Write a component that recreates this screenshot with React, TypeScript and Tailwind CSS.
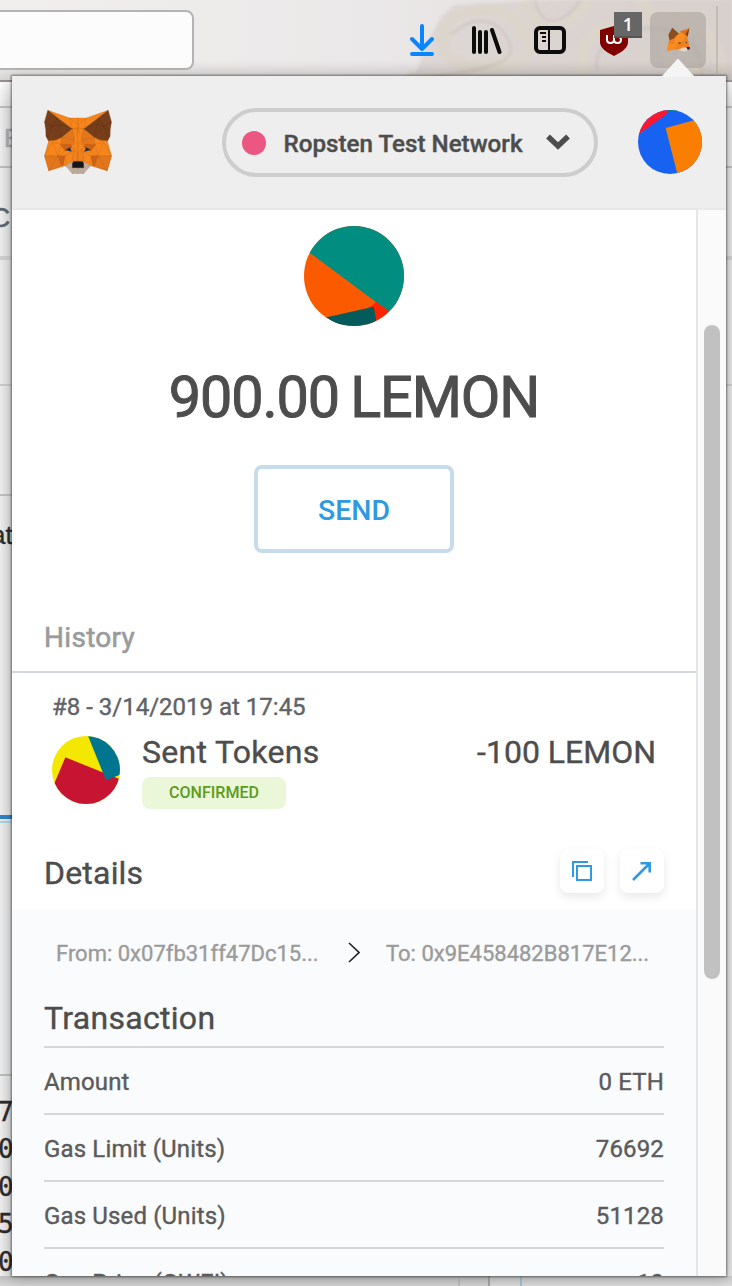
import type { ReactNode } from "react";

function FoxHalf() {
  return (
    <g stroke="#b05a14" strokeOpacity="0.55" strokeWidth="1.3" strokeLinejoin="round">
      <path d="M52 46L118 69H143V215L126 221L105 213L55 228L42 183L54 140L50 132L95 127L126 102Z" fill="#f6851b" />
      <path d="M52 46L126 102L95 127L76 136L54 138L50 130L46 124V108L42 82Z" fill="#763e1a" />
      <path d="M52 46L42 82L66 94L80 70ZM66 94L46 108L50 132L66 94M66 94L95 127M80 70L84 88L126 102M84 88L66 94M84 88L95 127" fill="none" stroke="#4f2708" />
      <path d="M118 69L143 90M118 69L126 102L143 98M126 102L143 102" fill="none" />
      <path d="M126 102L95 127L92 148L130 150L132 134Z" fill="#e4761b" />
      <path d="M95 127L128 135L143 102M128 135L143 148" fill="none" />
      <path d="M90 149H122L126 157L104 169Z" fill="#cd6116" />
      <path d="M42 183H82L94 213L55 228Z" fill="#e2761b" />
      <path d="M82 183H104L98 213H94Z" fill="#cd6116" />
      <path d="M55 228L82 183L66 142L42 183M66 142L92 148L82 183L104 169M95 127L54 140" fill="none" />
      <path d="M104 183L130 168L128 200L108 213Z" fill="#f6851b" />
      <path d="M130 160L143 178V200H126Z" fill="#ef8020" />
      <path d="M104 166L119 157L124 171Z" fill="#233447" stroke="none" />
      <path d="M105 213L126 200L130 218H143V237H126Z" fill="#c0ad9e" stroke="#9a887a" />
      <path d="M105 213L130 221L126 237L143 222" fill="none" stroke="#9a887a" />
      <path d="M130 200H143.5V219H126V206Z" fill="#161616" stroke="#161616" />
    </g>
  );
}

function FoxLogo() {
  return (
    <svg viewBox="41 45 204 193" className="h-16 w-[68px]">
      <FoxHalf />
      <g transform="translate(286 0) scale(-1 1)">
        <FoxHalf />
      </g>
    </svg>
  );
}

function SmallFox() {
  return (
    <svg viewBox="230 66 70 76" className="h-[25px] w-[23px]">
      <path d="M238 96L252 92L272 82L298 70L292 98L299 130L284 135L258 134L231 138L234 118Z" fill="#f0801c" />
      <path d="M246 68L266 86L252 100L238 106L234 90Z" fill="#8a4d20" />
      <path d="M268 80L298 70L291 92L282 88Z" fill="#dd7418" />
      <path d="M291 80L298 70L293 96L286 88Z" fill="#7d451e" />
      <path d="M254 97L272 82L288 92L276 110L254 118Z" fill="#f98e22" />
      <path d="M234 118L260 118L252 134L231 138Z" fill="#f98c20" />
      <path d="M264 112L274 114L268 118ZM286 112L291 111L290 116Z" fill="#40362c" />
      <path d="M264 136L278 128L298 128L296 136L282 141Z" fill="#e6d4c6" />
      <path d="M289 127H299V134L293 135Z" fill="#1c1c1c" />
    </svg>
  );
}

function HeaderAvatar() {
  return (
    <svg viewBox="1284 45 192 192" className="size-16 rounded-full bg-[#1862f2]">
      <path d="M1367 99L1452 76L1490 66V240H1403Z" fill="#fa7f00" />
      <path d="M1280 122L1374 54V40H1280Z" fill="#fc1630" />
      <path d="M1370 45H1412L1396 48H1376Z" fill="#13808a" />
    </svg>
  );
}

function TokenAvatar() {
  return (
    <svg viewBox="462 33 300 300" className="size-[100px] rounded-full bg-[#fc5a00]">
      <path d="M462 101L480 114L717 290L775 333V20H462Z" fill="#018e80" />
      <path d="M656 278L679 261L717 289L730 299L680 340Z" fill="#fe2400" />
      <path d="M510 311L671 275L683 340H510Z" fill="#035b5c" />
    </svg>
  );
}

function TransactionAvatar() {
  return (
    <svg viewBox="156 378 204 204" className="size-[68px] rounded-full bg-[#f5e800]">
      <path d="M196 442L370 512V590H140L162 523Z" fill="#c81433" />
      <path d="M263 375L318 511L370 490V370Z" fill="#00758f" />
    </svg>
  );
}

function Toolbar() {
  return (
    <div className="relative flex h-20 shrink-0 bg-linear-to-r from-[#f1efed] via-[#ebe8e9] to-[#dfd9d5]">
      <svg viewBox="0 0 732 80" className="absolute inset-0 h-20 w-[732px] blur-[1.5px]">
        <path d="M412 80C425 60 430 20 455 5L560 0H732V80Z" fill="#cfc6c1" opacity="0.45" />
        <g fill="none" stroke="#dcd5cb" strokeLinecap="round" strokeWidth="12" opacity="0.85">
          <path d="M443 28C470 0 510 5 523 30C550 65 480 80 412 78" />
          <path d="M448 31C430 55 465 75 510 60" />
          <path d="M528 0C530 40 570 35 588 0" />
          <path d="M585 74C570 40 610 15 650 18C700 12 725 40 720 80" />
          <path d="M640 2C680 35 650 70 700 72" />
        </g>
        <g fill="none" stroke="#beb3aa" strokeWidth="2" opacity="0.5">
          <path d="M452 34C480 8 505 25 510 45C518 67 470 70 430 78" />
          <path d="M535 0C540 30 565 25 580 0M598 70C590 45 625 28 650 28C685 28 705 50 702 78" />
        </g>
      </svg>
      <div className="absolute inset-x-0 bottom-0 h-5 bg-linear-to-b from-transparent to-black/10" />
      <div className="relative -ml-2 mt-2.5 h-[60px] w-[202px] rounded-lg border-2 border-[#b4b4b4] bg-[#fcfcfc]" />
      <div className="relative ml-[214px] flex w-[324px] items-start pt-2">
        <svg viewBox="0 0 28 36" className="mt-[15px] h-9 w-7 shrink-0" fill="none" stroke="#0a84ff" strokeWidth="4" strokeLinecap="round" strokeLinejoin="round">
          <path d="M14 3V26M4 16L14 26L24 16M4 31H24" />
        </svg>
        <svg viewBox="0 0 32 32" className="ml-[34px] mt-4 size-8 shrink-0" fill="none" stroke="#0c0c0d" strokeWidth="4" strokeLinecap="round">
          <path d="M4 4V28M10 8V28M16 8V28M22 6L29.5 28" />
        </svg>
        <svg viewBox="0 0 32 28" className="ml-8 mt-[18px] h-7 w-8 shrink-0" fill="none" stroke="#0c0c0d">
          <rect x="2" y="2" width="28" height="24" rx="4" strokeWidth="4" />
          <path d="M15 3V25" strokeWidth="2" />
          <path d="M6 7H12M8 11H12M8 15H12" strokeWidth="2" />
        </svg>
        <div className="relative ml-[34px] mt-[18px] h-[30px] w-[29px] shrink-0">
          <svg viewBox="0 0 28 30" className="h-[30px] w-7">
            <path d="M14 0L0 4V17C1 23 8 27 14 30C20 27 27 23 28 17V4Z" fill="#800000" />
            <path d="M7 9V14Q7 17 10.5 17Q14 17 14 14V9M14 14Q14 17 17.5 17Q21 17 21 13.5Q21 11 18 10.5" fill="none" stroke="white" strokeWidth="2" />
          </svg>
          <div className="absolute -top-3.5 left-3.5 flex h-[26px] w-7 items-center justify-center border-b-2 border-[#555] bg-[#666] font-['Open_Sans',sans-serif] text-[18px] font-semibold leading-none text-white">
            1
          </div>
        </div>
        <div className="ml-[21px] mt-1 flex h-14 w-14 shrink-0 justify-center rounded-lg bg-[#aaa29d]/60 pt-[15px]">
          <SmallFox />
        </div>
        <div className="ml-2.5 mt-[-2px] h-[68px] w-0.5 shrink-0 bg-[#c3bab5]" />
      </div>
    </div>
  );
}

function BackgroundPage() {
  return (
    <div className="flex flex-1 flex-col bg-linear-to-r from-[#efefef] from-0% via-[#dadada] via-[12px] to-[#e4e4e4] font-['Liberation_Sans',sans-serif]">
      <div className="h-0.5 bg-[#979090]" />
      <div className="h-[26px] border-b-2 border-[#bcbcbc] bg-linear-to-b from-[#ffffff]/80 to-transparent" />
      <div className="h-[60px] border-b-2 border-[#bcbcbc] pl-1 pt-4 text-[26px] leading-7 text-[#aaa] [-webkit-text-stroke:0.6px]">E</div>
      <div className="h-[92px] border-b-4 border-[#d0d0d0] pt-[34px] text-[28px] leading-8 text-[#5d6770] [-webkit-text-stroke:0.5px]">
        <span className="-ml-2.5">C</span>
      </div>
      <div className="h-[126px] border-b-2 border-[#cacaca]" />
      <div className="h-[110px] w-[400px] border-b-2 border-[#bfbfbf]" />
      <div className="h-[323px] w-[400px] border-b-4 border-[#2f83c9] pt-[21px] text-[26px] leading-9 text-[#2c2c2c] [-webkit-text-stroke:0.4px]">
        <span className="-ml-[9px]">at</span>
      </div>
      <div className="h-1 w-[400px] border-b-2 border-[#a9d4df]" />
      <div className="h-[253px] w-[400px] border-b-2 border-[#bcbcbc]" />
      <div className="h-[200px] pt-[18px] font-['DejaVu_Sans_Mono',monospace] text-[26px] leading-[37.4px] text-[#2c2c2c] [-webkit-text-stroke:0.4px]">
        {["7", "0", "0", "5", "0"].map((digit, index) => (
          <div key={index} className="-ml-0.5">
            {digit}
          </div>
        ))}
      </div>
      <div className="flex flex-1 bg-linear-to-b from-[#bfbfbf] to-[#d6d6d6]">
        <div className="w-[460px] border-r-2 border-[#bdbdbd]" />
        <div className="w-[30px] border-r-2 border-[#a5a5a5]" />
        <div className="w-8 border-r-2 border-[#9cc5cf] bg-white/20" />
        <div className="flex-1 bg-white/20" />
      </div>
    </div>
  );
}

function NetworkHeader() {
  return (
    <header className="flex h-[134px] shrink-0 items-start border-b-2 border-[#e9e9e9] bg-[#eee] pl-[31.6px] pt-8">
      <div className="mt-0.5 w-[68px]">
        <FoxLogo />
      </div>
      <div className="ml-[110.4px] flex h-[69px] w-[376px] items-center rounded-full border-4 border-[#cdcdcd] pl-4">
        <span className="size-6 rounded-full bg-[#ec5781]" />
        <span className="ml-[17.5px] mt-0.5 w-[250px] text-[24.2px] font-medium leading-8">Ropsten Test Network</span>
        <svg viewBox="0 0 24 16" className="ml-[13px] mt-[-1px] h-4 w-6" fill="none" stroke="#4d4d4d" strokeWidth="5.4">
          <path d="M2 2.5L12 12L22 2.5" strokeLinejoin="miter" />
        </svg>
      </div>
      <div className="ml-10 mt-0.5">
        <HeaderAvatar />
      </div>
    </header>
  );
}

function IconButton({ children }: { children: ReactNode }) {
  return (
    <button className="flex size-11 items-center justify-center rounded-lg bg-white shadow-[0_4px_10px_rgba(0,0,0,0.09)]">
      {children}
    </button>
  );
}

function DetailRow({ label, value }: { label: string; value: string }) {
  return (
    <div className="flex h-[67px] items-center justify-between border-b-2 border-[#d5d7d9] pt-0.5 text-[24px] leading-8 tracking-[0.15px] text-[#5b5b5b]">
      <span>{label}</span>
      <span>{value}</span>
    </div>
  );
}

function Content() {
  return (
    <div className="w-[684px] shrink-0 bg-white">
      <section className="flex flex-col items-center pt-4">
        <TokenAvatar />
        <div className="mt-10 flex items-center gap-[11px] text-[57.5px] leading-[64px] tracking-[-1.05px] [-webkit-text-stroke:1px]">
          <span>900.00</span>
          <span>LEMON</span>
        </div>
        <button className="mt-[35px] flex h-[88px] w-[200px] items-center justify-center rounded-lg border-4 border-[#c7dcea] pt-1 text-[28.4px] font-medium leading-8 text-[#2f9ae0] [-webkit-text-stroke:0px]">
          SEND
        </button>
      </section>
      <h2 className="mt-[68px] border-b-2 border-[#d2d8dd] pb-[17px] pl-8 pt-px text-[28px] leading-8 tracking-[0.3px] text-[#9b9b9b] [-webkit-text-stroke:0.6px]">History</h2>
      <section className="h-[176px] pl-10 pr-10 pt-[18px]">
        <div className="text-[24px] leading-8 text-[#5f6368]">#8 - 3/14/2019 at 17:45</div>
        <div className="flex items-start">
          <div className="mt-[13px]">
            <TransactionAvatar />
          </div>
          <div className="ml-[22px] mt-[9px]">
            <div className="text-[32px] leading-10 tracking-[0.3px]">Sent Tokens</div>
            <div className="mt-[5px] flex h-8 w-36 items-center justify-center rounded-lg bg-[#eaf8d9] pt-px text-[16.1px] font-medium text-[#5f9b1d] [-webkit-text-stroke:0px]">
              CONFIRMED
            </div>
          </div>
          <div className="ml-auto mt-[9px] text-[32px] leading-10">-100 LEMON</div>
        </div>
      </section>
      <section className="flex h-[60px] items-start pl-8 pr-8">
        <h3 className="mt-1 flex-1 text-[32px] leading-10 tracking-[0.2px]">Details</h3>
        <div className="flex gap-4">
          <IconButton>
            <svg viewBox="0 0 20 20" className="size-5" fill="none" stroke="#2f9ae0" strokeWidth="2">
              <path d="M1 16V1H16M5 5H19V19H5Z" />
            </svg>
          </IconButton>
          <IconButton>
            <svg viewBox="0 0 20 20" className="size-5" fill="none" stroke="#2f9ae0" strokeWidth="2.6">
              <path d="M1 19L17.5 2.5M8.5 2.3H17.7V11.5" />
            </svg>
          </IconButton>
        </div>
      </section>
      <section className="bg-[#fafbfd] pl-8 pr-8 pt-7">
        <div className="flex h-8 items-center pl-3 text-[22px] leading-8 text-[#9b9b9b]">
          <span className="w-[292px] pt-0.5">From: 0x07fb31ff47Dc15...</span>
          <svg viewBox="0 0 12 21" className="mt-[-1px] h-[21px] w-3" fill="none" stroke="#222" strokeWidth="1.6">
            <path d="M1 1L11 10.5L1 20" />
          </svg>
          <span className="ml-[26px] pt-0.5">To: 0x9E458482B817E12...</span>
        </div>
        <h3 className="mt-[29px] border-b-2 border-[#d5d7d9] pb-2 text-[32px] leading-10 tracking-[0.3px]">Transaction</h3>
        <DetailRow label="Amount" value="0 ETH" />
        <DetailRow label="Gas Limit (Units)" value="76692" />
        <DetailRow label="Gas Used (Units)" value="51128" />
        <DetailRow label="Gas Price (GWEI)" value="10" />
      </section>
    </div>
  );
}

export default function App() {
  return (
    <div className="relative flex h-[1286px] w-[732px] flex-col overflow-hidden">
      <Toolbar />
      <BackgroundPage />
      <main className="absolute left-3 top-[76px] flex h-[1200px] w-[714px] flex-col overflow-hidden bg-white font-[Roboto,sans-serif] text-[#4d4d4d] shadow-[0_0_2px_1px_rgba(0,0,0,0.45),0_3px_14px_rgba(0,0,0,0.22)] [-webkit-text-stroke:0.4px]">
        <NetworkHeader />
        <div className="flex min-h-0 flex-1">
          <Content />
          <div className="flex-1 border-l-2 border-[#e6e6e6] bg-[#fafafa] pl-1.5 pt-[115px]">
            <div className="h-[654px] w-4 rounded-full bg-[#c1c1c1]" />
          </div>
        </div>
      </main>
      <svg viewBox="0 0 32 19" className="absolute left-[662px] top-[58px] h-[19px] w-8">
        <path d="M0 18L15 1.5Q16 0 17 1.5L32 18V19H0Z" fill="#f4f4f4" />
      </svg>
    </div>
  );
}
